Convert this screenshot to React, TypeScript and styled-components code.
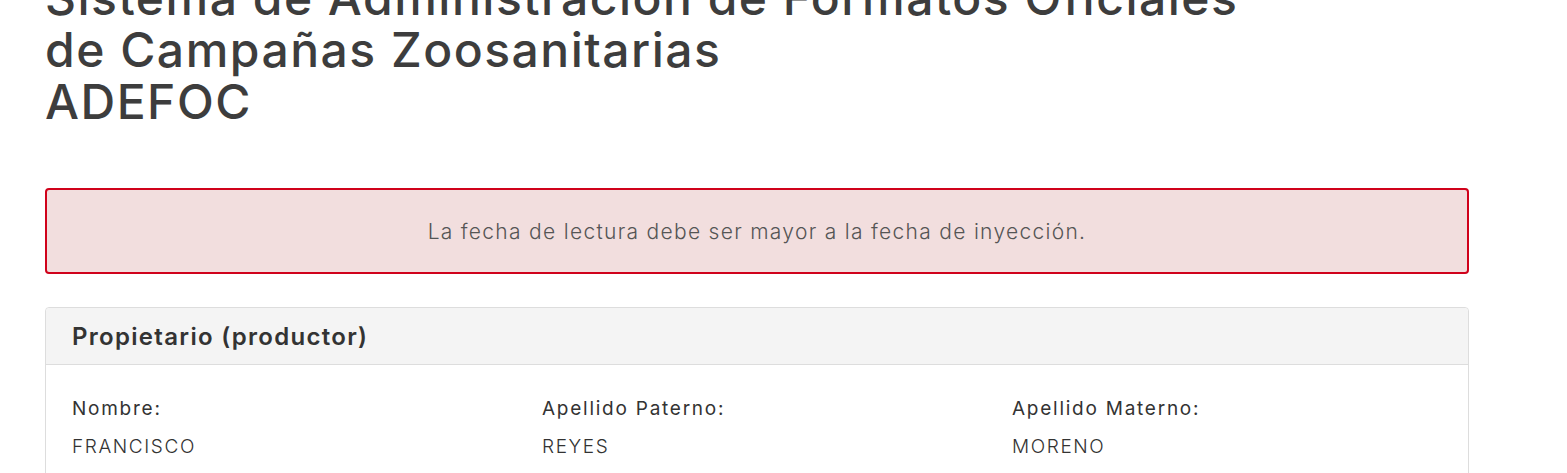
import React from "react";
import styled, { createGlobalStyle } from "styled-components";

const Global = createGlobalStyle`
  html, body { margin: 0; padding: 0; background: #fff; }
  body { font-family: Inter, "Open Sans", sans-serif; color: #333; overflow: hidden; }
`;

const Page = styled.div`
  padding: 0 98px 0 45px;
  display: flex;
  flex-direction: column;
  margin-top: -28px;
`;

const Title = styled.h1`
  margin: 0;
  font-size: 48px;
  line-height: 52px;
  font-weight: 500;
  color: #3d3d3d;
  letter-spacing: 1.5px;
`;

const Alert = styled.div`
  margin-top: 60px;
  height: 86px;
  box-sizing: border-box;
  border: 2px solid #d0021b;
  border-radius: 4px;
  background: #f2dede;
  display: flex;
  align-items: center;
  justify-content: center;
  font-size: 21px;
  font-weight: 300;
  color: #555;
  letter-spacing: 1.3px;
`;

const Panel = styled.section`
  margin-top: 33px;
  border: 1px solid #ddd;
  border-radius: 4px;
  background: #fff;
  height: 200px;
`;

const PanelHeader = styled.header`
  height: 57px;
  box-sizing: border-box;
  background: #f4f4f4;
  border-bottom: 1px solid #ddd;
  border-radius: 4px 4px 0 0;
  display: flex;
  align-items: center;
  padding: 0 26px;
  font-size: 24px;
  font-weight: 600;
  color: #333;
  letter-spacing: 1.3px;
`;

const Fields = styled.div`
  display: grid;
  grid-template-columns: repeat(3, 431px);
  column-gap: 39px;
  padding: 31px 26px 28px;
`;

const Field = styled.div`
  display: flex;
  flex-direction: column;
  gap: 12px;
`;

const Label = styled.span`
  font-size: 19px;
  font-weight: 400;
  line-height: 26px;
  color: #333;
  letter-spacing: 1.75px;
`;

const Value = styled.span`
  font-size: 19px;
  font-weight: 300;
  line-height: 26px;
  color: #333;
  letter-spacing: 1.6px;
`;

const fields = [
  { label: "Nombre:", value: "FRANCISCO" },
  { label: "Apellido Paterno:", value: "REYES" },
  { label: "Apellido Materno:", value: "MORENO" },
];

export default function App() {
  return (
    <>
      <Global />
      <Page>
        <Title>
          Sistema de Administración de Formatos Oficiales
          <br />
          de Campañas Zoosanitarias
          <br />
          ADEFOC
        </Title>
        <Alert>La fecha de lectura debe ser mayor a la fecha de inyección.</Alert>
        <Panel>
          <PanelHeader>Propietario (productor)</PanelHeader>
          <Fields>
            {fields.map((f) => (
              <Field key={f.label}>
                <Label>{f.label}</Label>
                <Value>{f.value}</Value>
              </Field>
            ))}
          </Fields>
        </Panel>
      </Page>
    </>
  );
}
